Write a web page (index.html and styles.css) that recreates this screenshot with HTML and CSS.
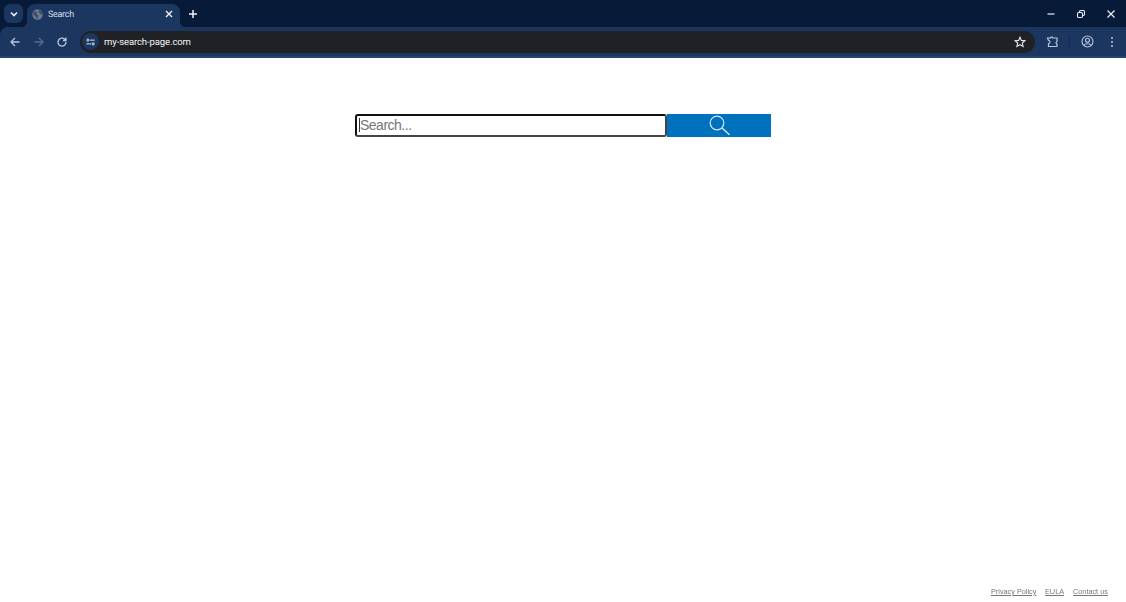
FILE: index.html
```html
<!DOCTYPE html>
<html lang="en">
<head>
<meta charset="utf-8">
<title>Search</title>
<link rel="stylesheet" href="styles.css">
</head>
<body>
<div class="browser">
  <div class="tabstrip">
    <div class="tabsearch">
      <svg width="10" height="10" viewBox="0 0 10 10"><path d="M2 3.500 5 6.500 8 3.500" fill="none" stroke="#e8eef8" stroke-width="1.600"/></svg>
    </div>
    <div class="tab">
      <svg class="globe" width="11" height="11" viewBox="0 0 11 11"><circle cx="5.500" cy="5.500" r="5.200" fill="#6c7a8e"/><path d="M2 2 5 3 4.500 5 6.500 6.500 5 10 3 7 1 5.500ZM7 1 10 3 10.500 6 8 5 6.500 3Z" fill="#3f4f68"/></svg>
      <span class="tabtitle">Search</span>
      <svg class="tabclose" width="10" height="10" viewBox="0 0 10 10"><path d="M2 2 8 8M8 2 2 8" stroke="#f0f4fa" stroke-width="1.400"/></svg>
    </div>
    <svg class="newtab" width="10" height="10" viewBox="0 0 10 10"><path d="M5 1V9M1 5H9" stroke="#f0f4fa" stroke-width="1.500"/></svg>
    <div class="winctl">
      <svg width="10" height="10" viewBox="0 0 10 10"><path d="M1.500 5H8.500" stroke="#e8eef8" stroke-width="1.200"/></svg>
      <svg width="10" height="10" viewBox="0 0 10 10"><rect x="3.500" y="1.500" width="5" height="5" rx="1.200" fill="none" stroke="#e8eef8" stroke-width="1.100"/><rect x="1.500" y="3.500" width="5" height="5" rx="1.200" fill="#071a38" stroke="#e8eef8" stroke-width="1.100"/></svg>
      <svg width="10" height="10" viewBox="0 0 10 10"><path d="M1.500 1.500 8.500 8.500M8.500 1.500 1.500 8.500" stroke="#e8eef8" stroke-width="1.200"/></svg>
    </div>
  </div>
  <div class="toolbar">
    <div class="navs">
      <svg width="12" height="12" viewBox="0 0 12 12"><path d="M10.500 6H2M6 2 2 6 6 10" fill="none" stroke="#b9c8de" stroke-width="1.300"/></svg>
      <svg width="12" height="12" viewBox="0 0 12 12"><path d="M1.500 6H10M6 2 10 6 6 10" fill="none" stroke="#566d90" stroke-width="1.300"/></svg>
      <svg width="12" height="12" viewBox="0 0 12 12"><path d="M10 6A4 4 0 1 1 8.800 3.200L10 4.400M10 1.500V4.500H7" fill="none" stroke="#b9c8de" stroke-width="1.300"/></svg>
    </div>
    <div class="omnibox">
      <div class="siteinfo">
        <svg width="9" height="8" viewBox="0 0 12 10"><circle cx="2.500" cy="2.500" r="1.500" fill="none" stroke="#dfe8f5" stroke-width="1.300"/><path d="M5.500 2.500H11.500M0.500 7.500H6.500" stroke="#dfe8f5" stroke-width="1.300"/><circle cx="9.500" cy="7.500" r="1.500" fill="none" stroke="#dfe8f5" stroke-width="1.300"/></svg>
      </div>
      <span class="url">my-search-page.com</span>
      <svg class="star" width="12" height="12" viewBox="0 0 12 12"><path d="M6 1.200 7.400 4.400 10.900 4.700 8.300 7 9.100 10.500 6 8.700 2.900 10.500 3.700 7 1.100 4.700 4.600 4.400Z" fill="none" stroke="#e4e8ee" stroke-width="1.100"/></svg>
    </div>
    <div class="tools">
      <svg width="13" height="13" viewBox="0 0 13 13"><path d="M1.500 3H4.500A1.300 1.300 0 0 1 7 3H11V6.500A1.300 1.300 0 0 0 11 9V11.500H2.500V8.500A1.300 1.300 0 0 0 2.500 5.500Z" fill="none" stroke="#b9c8de" stroke-width="1.200"/></svg>
      <span class="sep"></span>
      <svg width="13" height="13" viewBox="0 0 13 13"><circle cx="6.500" cy="6.500" r="5.500" fill="none" stroke="#b9c8de" stroke-width="1.100"/><circle cx="6.500" cy="5.200" r="2" fill="none" stroke="#b9c8de" stroke-width="1.100"/><path d="M2.800 10.200C4 8.200 9 8.200 10.200 10.200" fill="none" stroke="#b9c8de" stroke-width="1.100"/></svg>
      <svg class="kebab" width="4" height="12" viewBox="0 0 4 12"><circle cx="2" cy="2" r="1" fill="#b9c8de"/><circle cx="2" cy="6" r="1" fill="#b9c8de"/><circle cx="2" cy="10" r="1" fill="#b9c8de"/></svg>
    </div>
  </div>
</div>
<main class="page">
  <form class="search">
    <div class="field"><span class="caret"></span><span class="placeholder">Search...</span></div>
    <div class="go">
      <svg width="22" height="21" viewBox="0 0 22 21"><circle cx="8" cy="8" r="6.800" fill="none" stroke="#d5e6f5" stroke-width="1.200"/><path d="M13 13 20.500 19.800" stroke="#d5e6f5" stroke-width="1.400"/></svg>
    </div>
  </form>
  <footer class="foot">
    <a href="#">Privacy Policy</a>
    <a href="#">EULA</a>
    <a href="#">Contact us</a>
  </footer>
</main>
</body>
</html>
```

FILE: styles.css
```css
* { box-sizing: border-box; }
html, body { margin: 0; height: 100%; }
body {
  width: 1126px;
  height: 602px;
  overflow: hidden;
  display: flex;
  flex-direction: column;
  background: #fff;
  font-family: "Liberation Sans", Arial, sans-serif;
}
.browser { flex: none; height: 58px; background: #071a38; }
.tabstrip { height: 27px; display: flex; align-items: center; }
.tabsearch {
  width: 19px; height: 19px; margin: 0 0 0 4px;
  background: #1b365f; border-radius: 6px;
  display: flex; align-items: center; justify-content: center;
}
.tab {
  position: relative;
  width: 153px; height: 23px; margin: 4px 0 0 4px;
  padding: 0 6px 3px 5px;
  background: #1b365f; border-radius: 8px 8px 0 0;
  display: flex; align-items: center;
}
.tab::before, .tab::after {
  content: "";
  position: absolute;
  bottom: 0;
  width: 6px;
  height: 6px;
}
.tab::before { left: -6px; background: radial-gradient(circle at 0 0, transparent 6px, #1b365f 6.500px); }
.tab::after { right: -6px; background: radial-gradient(circle at 100% 0, transparent 6px, #1b365f 6.500px); }
.tabtitle {
  margin-left: 5px; flex: 1; padding-top: 2px;
  font-family: Roboto, sans-serif; font-size: 9px; letter-spacing: -0.300px; color: #d6dfec;
  text-rendering: geometricPrecision;
}
.newtab { margin-left: 8px; }
.winctl {
  margin-left: auto; padding-right: 10px;
  display: flex; gap: 20px;
}
.toolbar {
  height: 31px; background: #1b365f;
  border-radius: 8px 0 0 0;
  border-bottom: 2px solid #24446f;
  display: flex; align-items: center;
}
.navs { display: flex; gap: 11.500px; padding-left: 9px; width: 80px; }
.omnibox {
  width: 955px; height: 22px;
  background: #202124; border-radius: 11px;
  display: flex; align-items: center;
  padding: 0 9px 0 2px;
}
.siteinfo {
  width: 17px; height: 17px; border-radius: 50%;
  background: #1b365f;
  display: flex; align-items: center; justify-content: center;
}
.url {
  margin-left: 5px; flex: 1; padding-top: 2px;
  font-family: Roboto, sans-serif; font-size: 9.500px; letter-spacing: -0.100px; color: #f0f2f5;
  text-rendering: geometricPrecision;
}
.tools { flex: 1; display: flex; align-items: center; padding-left: 11px; }
.sep { width: 1px; height: 11px; background: #0f2a50; margin: 0 11px 0 10px; }
.kebab { margin-left: 16px; }
.page { flex: 1; display: flex; flex-direction: column; padding-top: 56px; }
.search { display: flex; margin-left: 355px; height: 23px; }
.field {
  width: 312px; height: 23px;
  border: 2px solid #111;
  border-bottom-color: #444;
  border-right-color: #444;
  border-radius: 3px;
  display: flex; align-items: center;
  padding: 0 0 1px 2px;
  background: #fff;
}
.caret { width: 1px; height: 14px; background: #333; }
.placeholder { font-size: 14px; letter-spacing: -0.500px; color: #757575; opacity: .99; }
.go {
  width: 104px; height: 23px; background: #0071bc;
  padding-left: 2px;
  display: flex; align-items: center; justify-content: center;
}
.foot {
  margin-top: auto; padding: 0 18px 6px 0;
  display: flex; justify-content: flex-end; gap: 9px;
}
.foot a { font-size: 7.300px; color: #777; text-decoration: underline; will-change: transform; }
```
